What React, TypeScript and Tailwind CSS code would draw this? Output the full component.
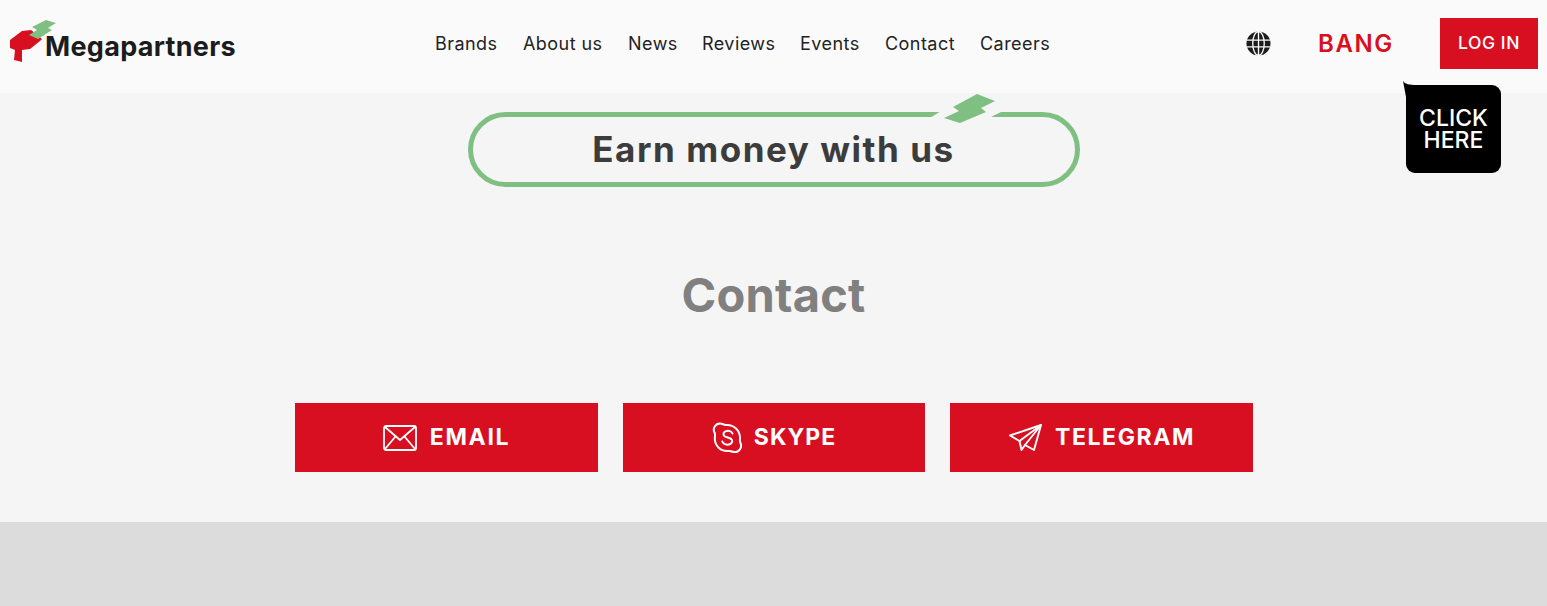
import React from "react";

const font = "font-['Inter','Liberation_Sans',sans-serif]";

function LogoMark() {
  return (
    <svg width="46" height="43" viewBox="0 0 46 43" className="shrink-0">
      <path d="M0 20 L12 11 L21 10 L32 19 L30 21 L20 29 L12 30 L12 42 L4 40 L5 30 L0 28 Z" fill="#d80f21" />
      <path d="M36 0 L46 3 L38 8 L42 10 L28 19 L19 15 L27 10 L22 7 Z" fill="#7fc082" />
    </svg>
  );
}

function Globe() {
  return (
    <svg width="25" height="25" viewBox="0 0 26 26">
      <circle cx="13" cy="13" r="12.5" fill="#1c1c1c" />
      <path d="M0.5 9.5H25.5M0.5 16.5H25.5M13 0.5V25.5" stroke="#fafafa" strokeWidth="1.4" />
      <ellipse cx="13" cy="13" rx="6" ry="12.5" fill="none" stroke="#fafafa" strokeWidth="1.4" />
    </svg>
  );
}

function Mail() {
  return (
    <svg width="34" height="26" viewBox="0 0 34 26" fill="none" stroke="#fff" strokeWidth="1.8" strokeLinejoin="round">
      <rect x="1" y="1" width="32" height="24" rx="2" />
      <path d="M2 2 L17 15 L32 2M2 24 L12.5 11.5M32 24 L21.5 11.5" />
    </svg>
  );
}

function Skype() {
  return (
    <svg width="31" height="32" viewBox="0 0 31 32" fill="none" stroke="#fff" strokeWidth="2" strokeLinecap="round">
      <path d="M8 1.5 C10.5 1.5 11.5 3 14 3 C22 2.5 28 8.5 28 16 C28 18 27.5 19 28.5 21 C30.5 25.5 27 30.5 22.5 30 C20 30 19 28.5 16 29 C8.5 29.5 2.5 23.5 2.8 16 C3 13.5 3.5 12.5 2.5 10.5 C0.3 6.5 3.5 1.5 8 1.5 Z" />
      <path d="M20.5 11.5 C19.5 9 16.5 8.5 14.5 9 C11.5 9.5 10.5 12.5 12.5 14.2 C14.5 15.8 19 15.5 20 18 C21 20.5 18.5 22.8 15.5 22.7 C13 22.6 11 21.5 10.3 19.5" />
    </svg>
  );
}

function Plane() {
  return (
    <svg width="33" height="28" viewBox="0 0 33 28" fill="none" stroke="#fff" strokeWidth="1.9" strokeLinejoin="round" strokeLinecap="round">
      <path d="M1 11.5 L32 1 L25 26 L16 21 L12.5 26 L10.5 17 Z" />
      <path d="M10.5 17 L32 1 L16 21" />
    </svg>
  );
}

const nav = [
  { t: "Brands", w: "w-[63px]" },
  { t: "About us", w: "w-[80px]" },
  { t: "News", w: "w-[49px]" },
  { t: "Reviews", w: "w-[73px]" },
  { t: "Events", w: "w-[60px]" },
  { t: "Contact", w: "w-[70px]" },
  { t: "Careers", w: "w-[68px]" },
];

const buttons = [
  { t: "EMAIL", icon: <Mail />, c: "w-[303px] gap-[13px] tracking-[1.7px] pl-[1px]" },
  { t: "SKYPE", icon: <Skype />, c: "w-[302px] gap-[11px] tracking-[1px] pl-[1px]" },
  { t: "TELEGRAM", icon: <Plane />, c: "w-[303px] gap-[13px] tracking-[1.6px] pl-[2px]" },
];

export default function App() {
  return (
    <div className={`${font} relative min-h-[606px] w-full flex flex-col bg-[#dcdcdc] overflow-hidden`}>
      <header className="h-[93px] bg-[#fafafa] flex items-center shrink-0 pl-[10px] pr-[9px] pb-[6px]">
        <div className="flex items-center w-[425px] shrink-0">
          <div className="mb-[5px]"><LogoMark /></div>
          <span className="ml-[-11px] mt-[6px] text-[27px] font-bold tracking-[0.3px] text-[#1c1c1c] leading-none">Megapartners</span>
        </div>
        <nav className="flex items-center gap-[25px] text-[18px] text-[#222] tracking-[0.45px] leading-none">
          {nav.map((n) => (
            <a key={n.t} className={`${n.w} whitespace-nowrap`}>{n.t}</a>
          ))}
        </nav>
        <div className="ml-auto flex items-center">
          <Globe />
          <span className="ml-[47px] w-[76px] text-[24px] font-semibold text-[#d80f21] tracking-[1.6px] leading-none">BANG</span>
          <a className="ml-[46px] w-[98px] h-[51px] bg-[#d80f21] text-white text-[17.5px] font-medium tracking-[0.6px] flex items-center justify-center">LOG IN</a>
        </div>
      </header>

      <main className="h-[429px] bg-[#f5f5f5] flex flex-col items-center shrink-0">
        <div className="relative mt-[19px] w-[612px] h-[75px] rounded-[38px] border-[5px] border-[#7fc082] flex items-center justify-center">
          <span className="text-[35px] font-bold text-[#3c3c3c] tracking-[1.55px] leading-none">Earn money with us</span>
          <svg width="85" height="32" viewBox="0 0 85 32" className="absolute left-[452px] top-[-23px]">
            <path d="M16 17 L78 17 L64 24 L5 24 Z" fill="#f5f5f5" />
            <path d="M52 0 L70 7 L56 14 L61 18 L35 29 L19 24 L34 17 L28 13 Z" fill="#7fc082" />
          </svg>
        </div>
        <h1 className="mt-[80px] text-[47px] font-bold text-[#808080] leading-[56px] tracking-[0.2px]">Contact</h1>
        <div className="mt-[80px] flex gap-[25px]">
          {buttons.map((b) => (
            <a key={b.t} className={`h-[69px] bg-[#d80f21] flex items-center justify-center ${b.c} text-white text-[23px] font-bold`}>
              {b.icon}
              <span>{b.t}</span>
            </a>
          ))}
        </div>
      </main>

      <div className="absolute left-[1403px] top-[81px] w-[98px] h-[92px]">
        <svg width="14" height="16" viewBox="0 0 14 16" className="absolute left-0 top-0">
          <path d="M0 0 C2 3 6 4 14 4 L14 16 L3 16 Z" fill="#000" />
        </svg>
        <div className="absolute left-[3px] top-[4px] w-[95px] h-[88px] bg-black rounded-[9px] flex items-center justify-center text-center text-white text-[23px] font-medium leading-[22px]">
          <span>CLICK<br />HERE</span>
        </div>
      </div>
    </div>
  );
}
